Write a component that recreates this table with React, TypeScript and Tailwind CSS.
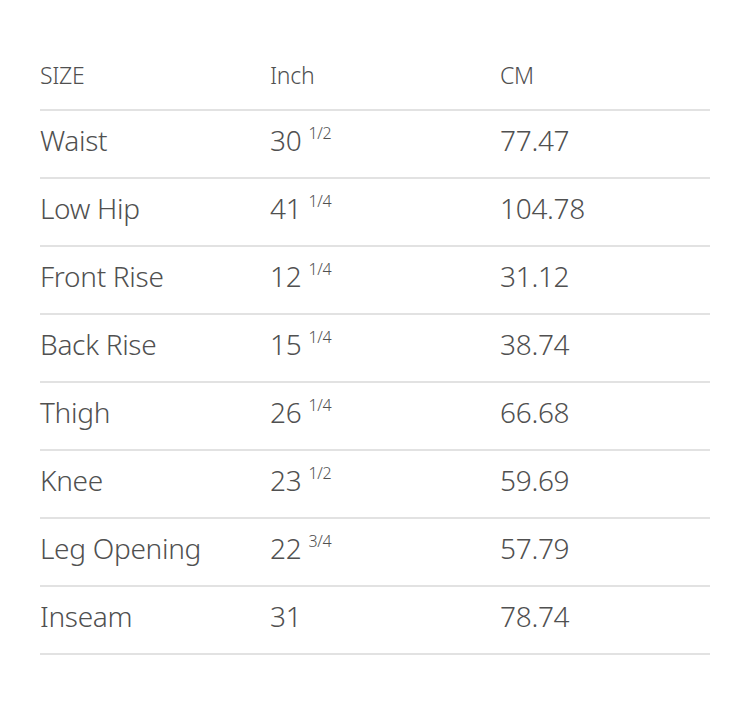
import React from 'react';

const rows: { name: string; inch: string; frac?: string; cm: string }[] = [
  { name: 'Waist', inch: '30', frac: '1/2', cm: '77.47' },
  { name: 'Low Hip', inch: '41', frac: '1/4', cm: '104.78' },
  { name: 'Front Rise', inch: '12', frac: '1/4', cm: '31.12' },
  { name: 'Back Rise', inch: '15', frac: '1/4', cm: '38.74' },
  { name: 'Thigh', inch: '26', frac: '1/4', cm: '66.68' },
  { name: 'Knee', inch: '23', frac: '1/2', cm: '59.69' },
  { name: 'Leg Opening', inch: '22', frac: '3/4', cm: '57.79' },
  { name: 'Inseam', inch: '31', cm: '78.74' },
];

const App = () => {
  return (
    <div
      className="w-[750px] h-[720px] bg-white px-10 pt-[43px] text-[#505050] font-light"
      style={{ fontFamily: '"Noto Sans", "Open Sans", sans-serif' }}
    >
      <div className="flex items-center h-[68px] pb-[2px] border-b-2 border-[#e2e2e2] text-[23px] tracking-[-0.3px]">
        <div className="w-[230px]">SIZE</div>
        <div className="w-[230px]">Inch</div>
        <div>CM</div>
      </div>
      {rows.map((r) => (
        <div
          key={r.name}
          className="flex items-center h-[68px] pb-[8px] border-b-2 border-[#e2e2e2] text-[28px] tracking-[-0.3px]"
        >
          <div className="w-[230px]">{r.name}</div>
          <div className="w-[230px] flex items-start">
            <span>{r.inch}</span>
            {r.frac && <span className="text-[16px] ml-[7px] mt-[2px]">{r.frac}</span>}
          </div>
          <div>{r.cm}</div>
        </div>
      ))}
    </div>
  );
};

export default App;
